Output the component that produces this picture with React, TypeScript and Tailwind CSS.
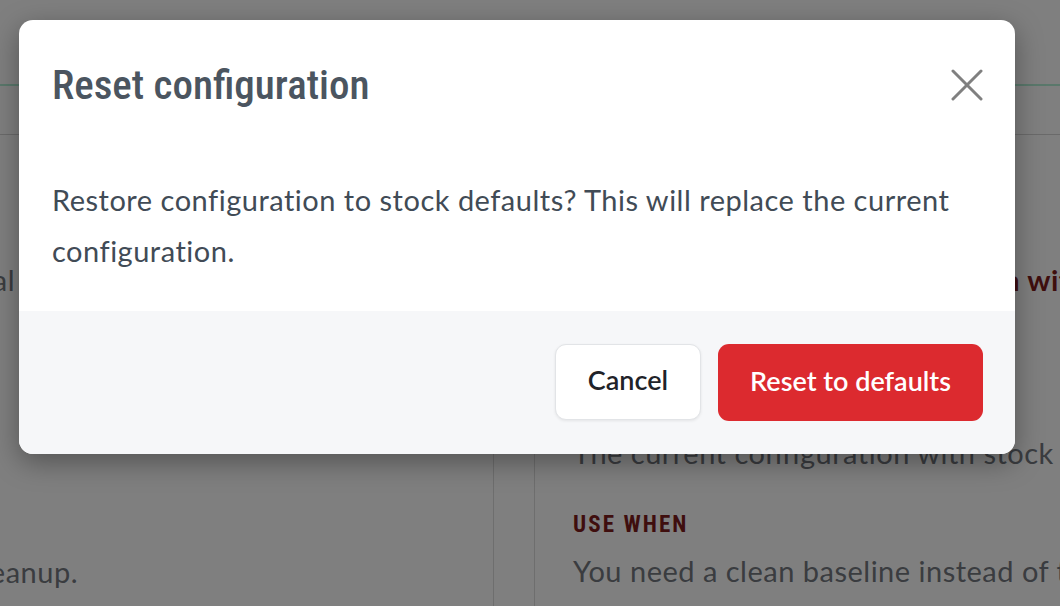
const body = "font-['Lato','Open_Sans',sans-serif]";
const cond = "font-['Roboto_Condensed','Liberation_Sans_Narrow','DejaVu_Sans_Condensed',sans-serif]";

const CloseIcon = () => (
  <svg width="32" height="32" viewBox="0 0 32 32" fill="none" stroke="#808080" strokeWidth="3" strokeLinecap="round">
    <path d="M2 2 L30 30" />
    <path d="M30 2 L2 30" />
  </svg>
);

const Background = () => (
  <div className={`h-[606px] w-full bg-white ${body} text-[29px] tracking-[0.5px]`}>
    <div className="h-[86px] border-b-2 border-[#b4f0d6]" />
    <div className="h-[49px] border-b border-[#d4d4d4]" />
    <div className="flex h-[471px]">
      {/* left panel, content scrolled off to the left */}
      <div className="w-[494px] overflow-hidden border-r border-[#dcdcdc] whitespace-nowrap text-[#747980]">
        <p className="-ml-[785px] w-[800px] pt-[119px] text-right leading-[51px]">Keeps settings unchanged and normal</p>
        <p className="-ml-[822px] w-[900px] pt-[241px] text-right leading-[51px]">Useful for migrations and cleanup.</p>
      </div>
      <div className="w-[40px]" />
      <div className="flex-1 overflow-hidden whitespace-nowrap border-l border-[#dcdcdc] pl-[38px]">
        <p className="pt-[119px] font-bold leading-[51px] text-[#7f1d1d]">
          Replace the current configuration with stock defaults
        </p>
        <p className={`${cond} mt-[88px] text-[23px] font-bold uppercase leading-[24px] tracking-[0.09em] text-[#7f1d1d]`}>
          What changes
        </p>
        <p className="mt-[11px] leading-[50px] text-[#747980]">
          The current configuration with stock defaults
        </p>
        <p className={`${cond} mt-[35px] text-[23px] font-bold uppercase leading-[24px] tracking-[0.09em] text-[#7f1d1d]`}>
          Use when
        </p>
        <p className="mt-[9px] leading-[50px] text-[#747980]">
          You need a clean baseline instead of the current setup
        </p>
      </div>
    </div>
  </div>
);

export default function App() {
  return (
    <div className="relative h-[606px] w-full overflow-hidden">
      <Background />
      <div className="absolute inset-0 bg-black/50" />
      <div className="absolute left-[19px] top-[20px] w-[996px] overflow-hidden rounded-[14px] bg-white shadow-[0_8px_28px_rgba(0,0,0,0.35)]">
        <div className="flex items-center justify-between pl-[33px] pr-[32px] pt-[43px]">
          <h2 className={`${cond} text-[41px] font-medium leading-[44px] text-[#4b5560]`}>
            Reset configuration
          </h2>
          <button type="button" aria-label="Close" className="flex h-[32px] w-[32px] items-center justify-center">
            <CloseIcon />
          </button>
        </div>
        <div className={`${body} px-[33px] pb-[35px] pt-[67px] text-[29px] leading-[51px] tracking-[0.5px] text-[#414b56]`}>
          Restore configuration to stock defaults? This will replace the current configuration.
        </div>
        <div className={`${body} flex justify-end gap-[17px] bg-[#f6f7f9] py-[33px] pr-[32px]`}>
          <button
            type="button"
            className="h-[76px] rounded-[11px] border border-[#e2e4e7] bg-white px-[32px] pb-[3px] text-[27px] font-semibold text-[#1f2329] shadow-[0_1px_3px_rgba(0,0,0,0.08)]"
          >
            Cancel
          </button>
          <button
            type="button"
            className="h-[77px] rounded-[11px] bg-[#dc2a2f] px-[32px] pb-[3px] text-[27px] font-semibold text-white"
          >
            Reset to defaults
          </button>
        </div>
      </div>
    </div>
  );
}
